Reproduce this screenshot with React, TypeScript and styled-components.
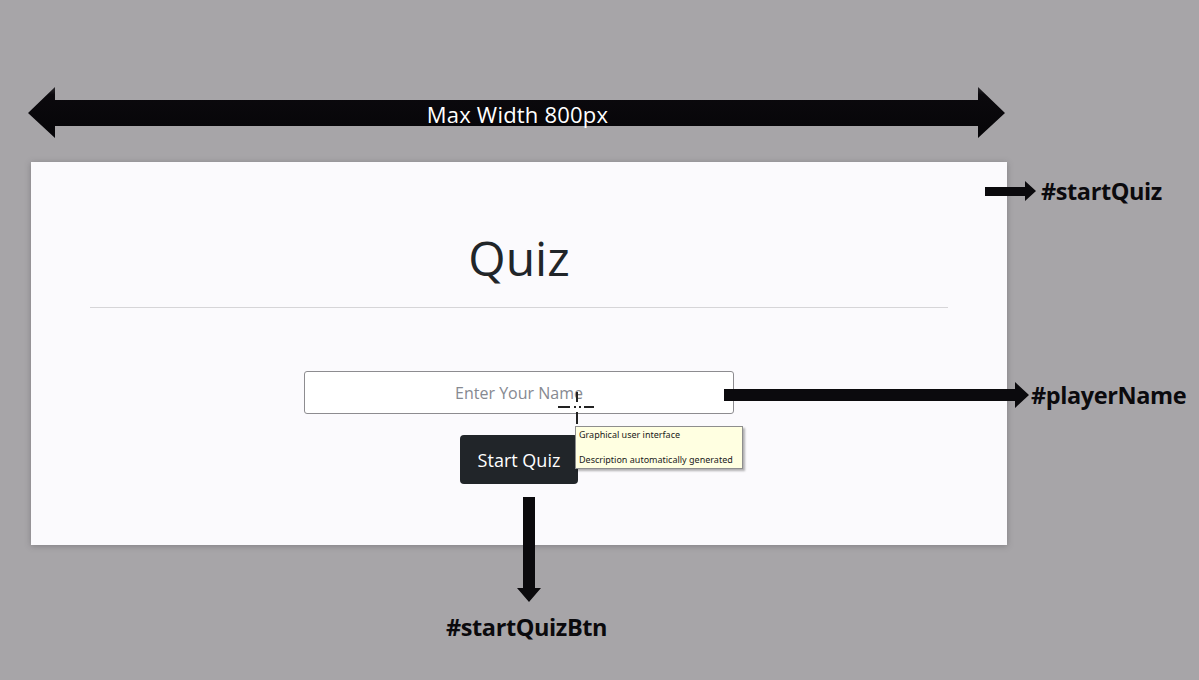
import React from "react";
import styled, { createGlobalStyle } from "styled-components";

const Global = createGlobalStyle`
  html, body { margin: 0; padding: 0; background: #a7a5a8; }
  * { box-sizing: border-box; }
`;

const Page = styled.div`
  position: relative;
  width: 1199px;
  height: 680px;
  overflow: hidden;
  background: #a7a5a8;
  padding: 87px 0 0 28px;
  font-family: "Open Sans", "Noto Sans", sans-serif;
`;

const Ruler = styled.div`
  display: grid;
  width: 977px;
  height: 51px;
  & > * { grid-area: 1 / 1; }
`;

const RulerLabel = styled.div`
  display: flex;
  align-items: center;
  justify-content: center;
  color: #ffffff;
  font-size: 22px;
  letter-spacing: 0.2px;
  padding-left: 2px;
  padding-top: 2px;
`;

const Card = styled.section`
  margin: 24px 0 0 3px;
  width: 976px;
  height: 383px;
  background: #fbfafd;
  box-shadow: 0 1px 6px rgba(60, 58, 62, 0.35);
  padding: 66px 59px 0;
  display: flex;
  flex-direction: column;
  align-items: center;
`;

const Title = styled.h1`
  margin: 0;
  font-family: "Open Sans", "Noto Sans", sans-serif;
  font-weight: 500;
  font-size: 48px;
  line-height: 60px;
  color: #212529;
`;

const Rule = styled.hr`
  align-self: stretch;
  margin: 19px 0 0;
  border: 0;
  border-top: 1px solid #d6d5d8;
`;

const NameInput = styled.input`
  margin-top: 63px;
  width: 430px;
  height: 43px;
  border: 1px solid #8d8c90;
  border-radius: 3px;
  background: #ffffff;
  text-align: center;
  padding-top: 2px;
  font-family: "Open Sans", "Noto Sans", sans-serif;
  font-size: 16px;
  color: #212529;
  outline: none;
  &::placeholder { color: #868991; }
`;

const StartButton = styled.button`
  margin-top: 21px;
  width: 118px;
  height: 49px;
  border: 0;
  border-radius: 4px;
  background: #212529;
  color: #ffffff;
  font-family: "Open Sans", "Noto Sans", sans-serif;
  font-size: 18px;
  padding-top: 2px;
  cursor: pointer;
`;

const Note = styled.div<{ $x: number; $y: number }>`
  position: absolute;
  left: ${(p) => p.$x}px;
  top: ${(p) => p.$y}px;
  display: flex;
  align-items: center;
`;

const NoteLabel = styled.span`
  font-family: "Open Sans", "Noto Sans", sans-serif;
  font-weight: 700;
  font-size: 23.5px;
  letter-spacing: -0.4px;
  color: #0b0a0d;
`;

const DownNote = styled(Note)`
  flex-direction: column;
  align-items: center;
`;

const Tooltip = styled.div`
  position: absolute;
  left: 575px;
  top: 426px;
  width: 168px;
  height: 43px;
  background: #ffffe1;
  border: 1px solid #8e8e8e;
  box-shadow: 2px 2px 2px rgba(0, 0, 0, 0.3);
  padding: 2px 3px;
  font-family: "Noto Sans", "Open Sans", sans-serif;
  font-size: 9px;
  line-height: 12.5px;
  color: #1a1a1a;
  white-space: nowrap;
`;

const Cursor = styled.svg`
  position: absolute;
  left: 556px;
  top: 390px;
`;

export default function App() {
  return (
    <>
      <Global />
      <Page>
        <Ruler>
          <svg width="977" height="51" viewBox="0 0 977 51">
            <defs>
              <linearGradient id="shaft" x1="0" y1="0" x2="0" y2="1">
                <stop offset="0" stopColor="#2a282c" />
                <stop offset="0.15" stopColor="#0b090d" />
                <stop offset="1" stopColor="#060508" />
              </linearGradient>
            </defs>
            <path
              d="M0 26 L27 0 L27 13 L950 13 L950 0 L977 26 L950 51 L950 39 L27 39 L27 51 Z"
              fill="url(#shaft)"
            />
          </svg>
          <RulerLabel>Max Width 800px</RulerLabel>
        </Ruler>

        <Card>
          <Title>Quiz</Title>
          <Rule />
          <NameInput placeholder="Enter Your Name" />
          <StartButton>Start Quiz</StartButton>
        </Card>

        <Note $x={985} $y={175}>
          <svg width="52" height="24" viewBox="0 0 52 24">
            <path d="M0 8 L40 8 L40 2 L51 12 L40 22 L40 17 L0 17 Z" fill="#0b0a0d" />
          </svg>
          <NoteLabel style={{ marginLeft: 4 }}>#startQuiz</NoteLabel>
        </Note>

        <Note $x={724} $y={379}>
          <svg width="306" height="30" viewBox="0 0 306 30">
            <path d="M0 9 L291 9 L291 2 L305 15 L291 28 L291 21 L0 21 Z" fill="#0b0a0d" />
          </svg>
          <NoteLabel style={{ marginLeft: 1 }}>#playerName</NoteLabel>
        </Note>

        <DownNote $x={446} $y={497}>
          <svg width="26" height="106" viewBox="0 0 26 106" style={{ marginLeft: 4 }}>
            <path d="M7 0 L19 0 L19 91 L25 91 L13 105 L1 91 L7 91 Z" fill="#0b0a0d" />
          </svg>
          <NoteLabel style={{ marginTop: 8 }}>#startQuizBtn</NoteLabel>
        </DownNote>

        <Cursor width="40" height="36" viewBox="0 0 40 36">
          <g stroke="#222" strokeWidth="2">
            <line x1="21" y1="2" x2="21" y2="12" />
            <line x1="2" y1="17" x2="14" y2="17" />
            <line x1="18" y1="17" x2="20" y2="17" />
            <line x1="23" y1="17" x2="25" y2="17" />
            <line x1="28" y1="17" x2="38" y2="17" />
            <line x1="21" y1="22" x2="21" y2="34" />
          </g>
        </Cursor>

        <Tooltip>
          Graphical user interface
          <br />
          <br />
          Description automatically generated
        </Tooltip>
      </Page>
    </>
  );
}
